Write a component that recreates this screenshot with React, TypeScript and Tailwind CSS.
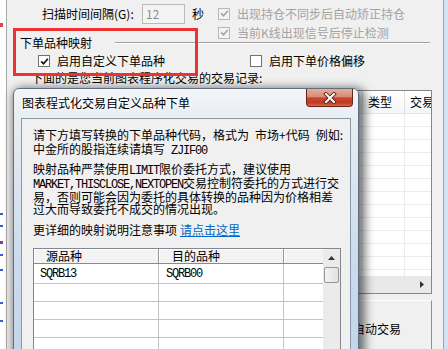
import React from 'react';

const mono = "font-['Liberation_Mono',monospace] tracking-[-1.2px]";

function CheckBox({ checked, disabled }: { checked?: boolean; disabled?: boolean }) {
  return (
    <span
      className={`w-[12px] h-[12px] shrink-0 flex items-center justify-center border ${
        disabled ? 'border-[#b7b7b7] bg-[#f4f4f4]' : 'border-[#707070] bg-white'
      }`}
    >
      {checked && (
        <svg width="9" height="9" viewBox="0 0 9 9">
          <path d="M1.2 4.4 L3.5 6.8 L7.9 1.8" fill="none" stroke={disabled ? '#a6a6a6' : '#111'} strokeWidth="1.7" />
        </svg>
      )}
    </span>
  );
}

export default function App() {
  const bgRows = Array.from({ length: 14 });
  const dlgRows = [
    ['SQRB13', 'SQRB00'],
    ['', ''],
    ['', ''],
    ['', ''],
    ['', ''],
    ['', ''],
  ];

  return (
    <div className="relative w-[448px] h-[349px] overflow-hidden flex bg-[#f0f0f0] text-[12px] leading-[12px] text-black font-['Noto_Sans_CJK_SC',sans-serif]">
      {/* chart edge on the left */}
      <div className="w-[7px] shrink-0 bg-white border-r border-[#a9a9a9] flex flex-col">
        <span className="mt-[23px] w-[3px] h-[4px] bg-[#e24646]" />
        <span className="mt-[186px] w-[3px] h-[2px] bg-[#3b5bd9]" />
        <span className="mt-[10px] w-[3px] h-[2px] bg-[#3b5bd9]" />
        <span className="mt-[14px] w-[3px] h-[3px] bg-[#8a3a8a]" />
        <span className="mt-[10px] w-[3px] h-[2px] bg-[#3b5bd9]" />
        <span className="mt-[13px] w-[3px] h-[2px] bg-[#3b5bd9]" />
        <span className="mt-[31px] w-[3px] h-[2px] bg-[#3b5bd9]" />
        <span className="mt-[16px] w-[3px] h-[2px] bg-[#3b5bd9]" />
      </div>

      {/* settings panel */}
      <div className="flex-1 flex flex-col">
        <div className="flex items-start pt-[4px]">
          <div className="flex items-center h-[20px] pl-[35px]">
            <span className="w-[100px]">扫描时间间隔(G):</span>
            <span className="w-[43px] h-[20px] border border-[#b9b9b9] bg-[#f3f3f3] flex items-center pl-[3px] text-[#8d8d8d]">12</span>
            <span className="ml-[7px] w-[26px]">秒</span>
          </div>
          <div className="flex flex-col gap-[6px] mt-[3px] text-[#a3a3a3]">
            <div className="flex items-center h-[13px] gap-[7px]">
              <CheckBox checked disabled />
              <span>出现持仓不同步后自动矫正持仓</span>
            </div>
            <div className="flex items-center h-[13px] gap-[7px]">
              <CheckBox checked disabled />
              <span>当前K线出现信号后停止检测</span>
            </div>
          </div>
        </div>

        <div className="flex items-center h-[13px] -mt-[2px]">
          <span className="pl-[13px] w-[108px]">下单品种映射</span>
          <span className="w-[315px] h-[2px] border-t border-[#a0a0a0] border-b border-b-white" />
        </div>

        <div className="flex items-center h-[13px] mt-[6px] pl-[31px]">
          <div className="w-[212px] flex items-center gap-[7px]">
            <CheckBox checked />
            <span>启用自定义下单品种</span>
          </div>
          <div className="flex items-center gap-[7px]">
            <CheckBox />
            <span>启用下单价格偏移</span>
          </div>
        </div>

        <p className="mt-[5px] pl-[24px] h-[12px] whitespace-nowrap">下面的是您当前图表程序化交易的交易记录:</p>

        {/* trade records list */}
        <div className="ml-[13px] mt-[6px] w-[412px] h-[204px] border border-[#828790] bg-white flex flex-col">
          <div className="h-[23px] shrink-0 flex border-b border-[#e5e5e5] bg-[linear-gradient(#ffffff,#f4f5f7)]">
            <div className="w-[342px] border-r border-[#e1e1e1]" />
            <div className="w-[42px] border-r border-[#e1e1e1] pl-[5px] flex items-center">类型</div>
            <div className="flex-1 pl-[5px] flex items-center overflow-hidden whitespace-nowrap">交易价格</div>
          </div>
          <div className="flex-1 overflow-hidden">
            {bgRows.map((_, i) => (
              <div key={i} className="h-[13px] flex border-b border-[#ececec]">
                <div className="w-[342px] border-r border-[#ececec]" />
                <div className="w-[42px] border-r border-[#ececec]" />
                <div className="flex-1" />
              </div>
            ))}
          </div>
          <div className="h-[17px] shrink-0 bg-[#e9e9e9] flex items-center justify-end pr-[7px]">
            <svg width="4" height="7" viewBox="0 0 4 7">
              <path d="M0 0 L4 3.5 L0 7 Z" fill="#333" />
            </svg>
          </div>
        </div>

        <div className="mt-[6px] flex justify-end pr-[11px]">
          <div className="w-[132px] h-[56px] border-t border-t-white border-r border-r-[#8f8f8f] flex items-center justify-end pr-[30px] text-[12px]">
            启动自动交易
          </div>
        </div>
      </div>

      <div className="w-[5px] shrink-0 border-l border-[#9aa5b1] bg-[#d4e3f4]" />

      {/* red highlight annotation */}
      <div className="absolute left-[13px] top-[28px] w-[185px] h-[48px] border-[3px] border-[#ee3131]" />

      {/* custom symbol dialog */}
      <div className="absolute left-[13px] top-[88px] w-[346px] h-[300px] flex flex-col rounded-t-[6px] border border-[#5f6f82] bg-[linear-gradient(180deg,#f3f5f8_0%,#e6ecf2_12%,#cddcec_55%,#bfd3ea_100%)] shadow-[3px_3px_10px_3px_rgba(0,0,0,0.55)]">
        <div className="h-[29px] shrink-0 flex items-start">
          <span className="pl-[8px] pt-[8px] [text-shadow:0_0_5px_#fff,0_0_5px_#fff]">图表程式化交易自定义品种下单</span>
          <div className="ml-auto mr-[5px] w-[47px] h-[18px] rounded-b-[4px] border border-t-0 border-[#6a2418] bg-[linear-gradient(180deg,#e8ab9c_0%,#da8c7a_45%,#c4482f_52%,#c03a22_80%,#d6694c_100%)] flex items-center justify-center">
            <svg width="14" height="12" viewBox="0 0 14 12">
              <path d="M3 2 L11 10 M11 2 L3 10" stroke="#5a1a10" strokeWidth="3.8" strokeLinecap="square" />
              <path d="M3 2 L11 10 M11 2 L3 10" stroke="#fff" strokeWidth="2" strokeLinecap="square" />
            </svg>
          </div>
        </div>

        <div className="mx-[7px] flex-1 border border-[#8b98a8] bg-[#f0f0f0] pl-[11px] pt-[10px] flex flex-col">
          <p className="leading-[12px] whitespace-nowrap">
            请下方填写转换的下单品种代码，格式为<span className={mono}> </span>市场+代码<span className={mono}> </span>例如:
            <br />
            中金所的股指连续请填写<span className={mono}> ZJIF00</span>
          </p>
          <p className="mt-[6px] leading-[12px] whitespace-nowrap">
            映射品种严禁使用<span className={mono}>LIMIT</span>限价委托方式，建议使用
            <br />
            <span className={mono}>MARKET,THISCLOSE,NEXTOPEN</span>交易控制符委托的方式进行交
            <br />
            易，否则可能会因为委托的具体转换的品种因为价格相差
            <br />
            过大而导致委托不成交的情况出现。
          </p>
          <div className="mt-[9px] h-[12px] flex items-center whitespace-nowrap">
            <span className="w-[147px]">更详细的映射说明注意事项</span>
            <span className="text-[#0066cc] underline">请点击这里</span>
          </div>

          {/* mapping list */}
          <div className="mt-[12px] w-[308px] h-[120px] border border-[#828790] bg-white flex">
            <div className="flex-1 flex flex-col">
              <div className="h-[15px] shrink-0 flex bg-[#f3f3f3] border-b border-[#8a8a8a]">
                <div className="w-[125px] pl-[12px] flex items-center border-r border-[#9a9a9a] shadow-[inset_1px_1px_0_#fff]">源品种</div>
                <div className="w-[125px] pl-[13px] flex items-center border-r border-[#9a9a9a] shadow-[inset_1px_1px_0_#fff]">目的品种</div>
                <div className="flex-1 shadow-[inset_1px_1px_0_#fff]" />
              </div>
              {dlgRows.map((r, i) => (
                <div key={i} className={`${i === 0 ? 'h-[20px]' : 'h-[18px]'} shrink-0 flex border-b border-[#c4c4c4]`}>
                  <div className={`w-[125px] pl-[6px] flex items-center border-r border-[#c4c4c4] ${mono}`}>{r[0]}</div>
                  <div className={`w-[125px] pl-[7px] flex items-center border-r border-[#c4c4c4] ${mono}`}>{r[1]}</div>
                  <div className="flex-1" />
                </div>
              ))}
            </div>
            <div className="w-[17px] shrink-0 bg-[#ebebeb] flex flex-col items-center">
              <div className="h-[17px] flex items-center justify-center">
                <svg width="7" height="4" viewBox="0 0 7 4">
                  <path d="M0 4 L3.5 0 L7 4 Z" fill="#333" />
                </svg>
              </div>
              <div className="mt-[1px] w-[15px] h-[16px] rounded-[2px] border border-[#979797] bg-[linear-gradient(90deg,#f3f3f3,#e2e2e2)]" />
            </div>
          </div>
        </div>
      </div>
    </div>
  );
}
